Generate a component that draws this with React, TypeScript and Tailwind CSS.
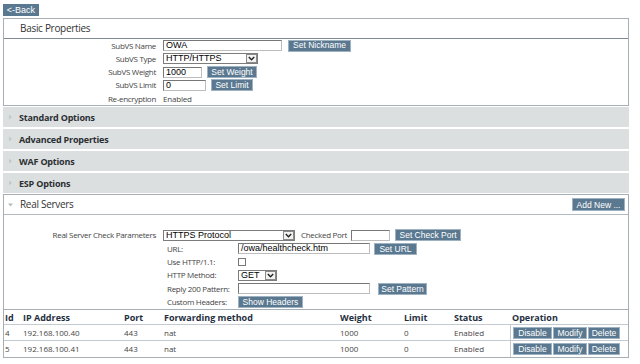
import React from "react";

const ARIAL = "font-['Liberation_Sans',Arial,sans-serif]";
const SANS = "font-['Open_Sans','DejaVu_Sans',sans-serif]";

const Btn: React.FC<{ children: React.ReactNode; className?: string }> = ({ children, className = "" }) => (
  <span
    className={`inline-flex shrink-0 items-center justify-center h-[12px] bg-[#5a7890] border border-[#9fb2c1] text-white text-[8.5px] leading-none whitespace-nowrap ${ARIAL} ${className}`}
  >
    {children}
  </span>
);

const Input: React.FC<{ value?: string; className?: string }> = ({ value = "", className = "" }) => (
  <div
    className={`h-[11px] shrink-0 flex items-center border border-[#777] border-r-[#bdbdbd] border-b-[#bdbdbd] bg-white text-[9px] leading-none pl-[2px] text-black ${ARIAL} ${className}`}
  >
    {value}
  </div>
);

const Select: React.FC<{ value: string; className?: string }> = ({ value, className = "" }) => (
  <div
    className={`h-[11px] shrink-0 flex items-center border border-[#7c7c7c] bg-white text-[9px] leading-none pl-[2px] text-black ${ARIAL} ${className}`}
  >
    <span className="flex-1">{value}</span>
    <span className="w-[11px] h-[9px] border border-[#8a8a8a] bg-[#f2f2f2] flex items-center justify-center">
      <svg width="7" height="5" viewBox="0 0 7 5">
        <path d="M0.8 1 L3.5 3.8 L6.2 1" stroke="#222" strokeWidth="1.4" fill="none" />
      </svg>
    </span>
  </div>
);

const Tri: React.FC<{ down?: boolean }> = ({ down }) => (
  <svg width="5" height="6" viewBox="0 0 5 6" className="shrink-0">
    {down ? <path d="M0 1.5 L5 1.5 L2.5 4.5 Z" fill="#b3b8bc" /> : <path d="M1 0.5 L4 3 L1 5.5 Z" fill="#c4c8cb" />}
  </svg>
);

const basicRows: Array<{ label: string; field: React.ReactNode }> = [
  {
    label: "SubVS Name",
    field: (
      <>
        <Input value="OWA" className="w-[119px]" />
        <Btn className="ml-[6px] w-[63px]">Set Nickname</Btn>
      </>
    ),
  },
  { label: "SubVS Type", field: <Select value="HTTP/HTTPS" className="w-[95px]" /> },
  {
    label: "SubVS Weight",
    field: (
      <>
        <Input value="1000" className="w-[39px]" />
        <Btn className="ml-[5px] w-[50px]">Set Weight</Btn>
      </>
    ),
  },
  {
    label: "SubVS Limit",
    field: (
      <>
        <Input value="0" className="w-[43px]" />
        <Btn className="ml-[5px] w-[42px]">Set Limit</Btn>
      </>
    ),
  },
  { label: "Re-encryption", field: <span className="text-[8px] tracking-[-0.2px] text-[#444]">Enabled</span> },
];

const checkRows: Array<{ label: string; field: React.ReactNode }> = [
  {
    label: "URL:",
    field: (
      <>
        <Input value="/owa/healthcheck.htm" className="w-[132px]" />
        <Btn className="ml-[4px] w-[43px]">Set URL</Btn>
      </>
    ),
  },
  { label: "Use HTTP/1.1:", field: <div className="w-[8px] h-[8px] border border-[#777] bg-white" /> },
  { label: "HTTP Method:", field: <Select value="GET" className="w-[39px]" /> },
  {
    label: "Reply 200 Pattern:",
    field: (
      <>
        <Input className="w-[132px]" />
        <Btn className="ml-[8px] w-[49px]">Set Pattern</Btn>
      </>
    ),
  },
  { label: "Custom Headers:", field: <Btn className="w-[65px]">Show Headers</Btn> },
];

const servers = [
  { id: "4", ip: "192.168.100.40" },
  { id: "5", ip: "192.168.100.41" },
];

const COLS = "grid grid-cols-[19px_101px_40px_176px_64px_50px_56px_1fr]";

export default function App() {
  return (
    <div className={`w-[640px] h-[364px] bg-white overflow-hidden ${SANS} text-[#444]`}>
      <div className="ml-[3px] w-[626px] pt-[4px]">
        <div className="flex">
          <Btn className="w-[36px] h-[11px] border-0 text-[9px]">{"<-Back"}</Btn>
        </div>

        {/* Basic Properties */}
        <div className="mt-[2px] border border-[#a7afb6]">
          <div className="h-[20px] flex items-center pl-[16px] text-[10px] tracking-[-0.3px] text-[#333] border-b border-[#7d8a95]">
            Basic Properties
          </div>
          <div>
            {basicRows.map((r) => (
              <div key={r.label} className="h-[13.25px] flex items-center">
                <div className="w-[152px] text-right text-[8px] tracking-[-0.3px] text-[#444]">{r.label}</div>
                <div className="ml-[7px] flex items-center">{r.field}</div>
              </div>
            ))}
          </div>
        </div>

        {/* Collapsed sections */}
        <div className="mt-[1px] flex flex-col gap-[2px]">
          {["Standard Options", "Advanced Properties", "WAF Options", "ESP Options"].map((t) => (
            <div key={t} className="h-[20px] bg-[#dcdfe0] flex items-center pl-[5px] gap-[6px]">
              <Tri />
              <span className="text-[9px] font-bold text-[#2b2f33] tracking-[-0.2px]">{t}</span>
            </div>
          ))}
        </div>

        {/* Real Servers */}
        <div className="mt-[1px] border border-[#a7afb6]">
          <div className="h-[20px] flex items-center pl-[4px] border-b border-[#b3bac0]">
            <Tri down />
            <span className="ml-[7px] text-[10px] tracking-[-0.3px] text-[#333]">Real Servers</span>
            <Btn className="ml-auto mr-[3px] w-[53px] h-[13px]">Add New ...</Btn>
          </div>

          <div className="pt-[13px] h-[95px] border-b border-[#a7afb6]">
            <div className="h-[14px] flex items-center">
              <div className="w-[152px] text-right text-[8px] tracking-[-0.3px]">Real Server Check Parameters</div>
              <Select value="HTTPS Protocol" className="ml-[7px] w-[132px]" />
              <span className="ml-[6px] text-[8px] tracking-[-0.3px]">Checked Port</span>
              <Input className="ml-[4px] w-[39px]" />
              <Btn className="ml-[5px] w-[66px]">Set Check Port</Btn>
            </div>
            {checkRows.map((r) => (
              <div key={r.label} className="h-[13.3px] flex items-center pl-[163px]">
                <div className="w-[71px] text-[8px] tracking-[-0.3px]">{r.label}</div>
                <div className="flex items-center">{r.field}</div>
              </div>
            ))}
          </div>

          <div className={`${COLS} h-[15px] items-center border-b border-[#c3cad0] text-[9px] font-bold text-[#1f2f3f]`}>
            <span className="pl-[1px]">Id</span>
            <span>IP Address</span>
            <span>Port</span>
            <span>Forwarding method</span>
            <span>Weight</span>
            <span>Limit</span>
            <span>Status</span>
            <span className="pl-[2px]">Operation</span>
          </div>
          {servers.map((s, i) => (
            <div
              key={s.id}
              className={`${COLS} h-[16px] items-center text-[8px] text-[#444] ${i === 0 ? "border-b border-[#c3cad0]" : ""}`}
            >
              <span className="pl-[1px]">{s.id}</span>
              <span>{s.ip}</span>
              <span>443</span>
              <span>nat</span>
              <span>1000</span>
              <span>0</span>
              <span>Enabled</span>
              <span className="h-full flex items-center gap-[1px] pl-[2px] border-l border-[#c3cad0]">
                <Btn className="w-[39px]">Disable</Btn>
                <Btn className="w-[34px]">Modify</Btn>
                <Btn className="w-[32px]">Delete</Btn>
              </span>
            </div>
          ))}
        </div>
      </div>
    </div>
  );
}
